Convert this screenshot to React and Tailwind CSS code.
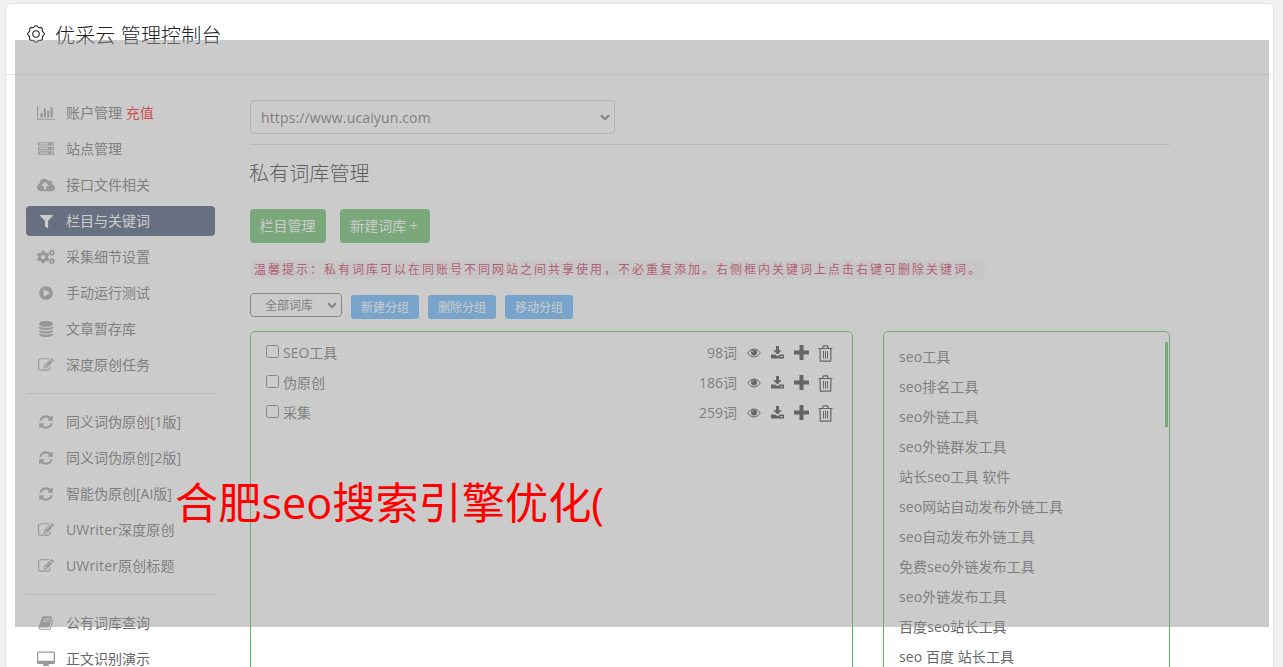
import React from "react";
import { FaCloudUploadAlt, FaFilter, FaCogs } from "react-icons/fa";

const PATHS = {
  chart: "M640 896v512H384V896h256zm384-512v1024H768V384h256zm1024 1152v128H0V128h128v1408h1920zm-640-896v768h-256V640h256zm384-384v1152h-256V256h256z",
  server: "M128 1408h1024v-128H128v128zm0-512h1024V768H128v128zm1568 448q0-40-28-68t-68-28-68 28-28 68 28 68 68 28 68-28 28-68zM128 384h1024V256H128v128zm1568 448q0-40-28-68t-68-28-68 28-28 68 28 68 68 28 68-28 28-68zm0-512q0-40-28-68t-68-28-68 28-28 68 28 68 68 28 68-28 28-68zm96 832v384H0v-384h1792zm0-512v384H0V640h1792zm0-512v384H0V128h1792z",
  play: "M896 128q209 0 385.5 103T1561 510.5 1664 896t-103 385.5-279.5 279.5T896 1664t-385.5-103T231 1281.5 128 896t103-385.500T510.500 231 896 128zm384 823q32-18 32-55t-32-55L736 521q-31-19-64-1-32 19-32 56v640q0 37 32 56 16 8 32 8 17 0 32-9z",
  database: "M896 768q237 0 443-43t325-127v170q0 69-103 128t-280 93.500-385 34.500-385-34.500T231 896 128 768V598q119 84 325 127t443 43zm0 768q237 0 443-43t325-127v170q0 69-103 128t-280 93.500-385 34.500-385-34.500-280-93.500-103-128v-170q119 84 325 127t443 43zm0-384q237 0 443-43t325-127v170q0 69-103 128t-280 93.500-385 34.500-385-34.500-280-93.500-103-128V982q119 84 325 127t443 43zM896 0q208 0 385 34.500t280 93.500 103 128v128q0 69-103 128t-280 93.500T896 640t-385-34.500T231 512 128 384V256q0-69 103-128t280-93.500T896 0z",
  edit: "M888 1184l116-116-152-152-116 116v56h96v96h56zm440-720q-16-16-33 1L945 815q-17 17-1 33t33-1l350-350q17-17 1-33zm80 594v190q0 119-84.500 203.500T1120 1536H288q-119 0-203.500-84.500T0 1248V416q0-119 84.500-203.500T288 128h832q63 0 117 25 15 7 18 23 3 17-9 29l-49 49q-14 14-32 8-23-6-45-6H288q-66 0-113 47t-47 113v832q0 66 47 113t113 47h832q66 0 113-47t47-113v-126q0-13 9-22l64-64q15-15 35-7t20 29zm-96-738l288 288-672 672H640V992zm444 132l-92 92-288-288 92-92q28-28 68-28t68 28l152 152q28 28 28 68t-28 68z",
  refresh: "M1639 1056q0 5-1 7-64 268-268 434.500T892 1664q-146 0-282.500-55T366 1452l-129 129q-19 19-45 19t-45-19-19-45v-448q0-26 19-45t45-19h448q26 0 45 19t19 45-19 45l-137 137q71 66 161 102t187 36q134 0 250-65t186-179q11-17 53-117 8-23 30-23h192q13 0 22.500 9.500t9.500 22.500zm25-800v448q0 26-19 45t-45 19h-448q-26 0-45-19t-19-45 19-45l138-138Q1097 384 896 384q-134 0-250 65T460 628q-11 17-53 117-8 23-30 23H178q-13 0-22.500-9.500T146 736v-7q65-268 270-434.500T896 128q146 0 284 55.500T1425 340l130-129q19-19 45-19t45 19 19 45z",
  book: "M1703 478q40 57 18 129l-275 906q-19 64-76.500 107.500T1247 1664H324q-77 0-148.500-53.500T76 1479q-24-67-2-127 0-4 3-27t4-37q1-8-3-21.500t-3-19.500q2-11 8-21t16.500-23.500T116 1179q23-38 45-91.500t30-91.500q3-10 .5-30t-.5-28q3-11 17-28t17-23q21-36 42-92t25-90q1-9-2.500-32t.5-28q4-13 22-30.500t22-22.500q19-26 42.500-84.500T404 411q1-8-3-25.500t-2-26.500q2-8 9-18t18-23 17-21q8-12 16.500-30.500t15-35 16-36 19.500-32T533.500 139t36-11.500T617 133l-1 3q38-9 51-9h761q74 0 114 56t18 130l-274 906q-36 119-71.500 153.500T1086 1407H217q-27 0-38 15-11 16-1 43 24 70 144 70h923q29 0 56-15.500t35-41.500l300-987q7-22 5-57 38 15 59 43zm-1064 2q-4 13 2 22.500t20 9.500h608q13 0 25.500-9.500T1311 480l21-64q4-13-2-22.500t-20-9.500H702q-13 0-25.500 9.500T660 416zm-83 256q-4 13 2 22.500t20 9.500h608q13 0 25.500-9.500T1228 736l21-64q4-13-2-22.500t-20-9.500H619q-13 0-25.500 9.500T577 672z",
};

function Glyph({ name }) {
  const wide = name === "chart";
  return (
    <svg
      viewBox={wide ? "0 0 2048 1792" : "0 0 1792 1792"}
      width={wide ? 18 : 16}
      height="16"
      fill="currentColor"
    >
      <path d={PATHS[name]} />
    </svg>
  );
}

function Desktop() {
  return (
    <svg viewBox="0 0 18 16" width="18" height="16" fill="currentColor">
      <path
        fillRule="evenodd"
        d="M1.500 0.500h15A1.500 1.500 0 0 1 18 2v9.500a1.500 1.500 0 0 1-1.500 1.500H11.500l.5 1.500v.5H6v-.5L6.500 13H1.500A1.500 1.500 0 0 1 0 11.500V2A1.500 1.500 0 0 1 1.500 .5zM1.300 1.800v8h15.400v-8z"
      />
    </svg>
  );
}

const gearPath =
  Array.from({ length: 96 }, (_, i) => {
    const a = (i / 96) * Math.PI * 2;
    const r = 7.7 + 0.6 * Math.cos(8 * a);
    return `${i ? "L" : "M"}${(9 + r * Math.sin(a)).toFixed(2)} ${(9 - r * Math.cos(a)).toFixed(2)}`;
  }).join("") + "Z";

function Gear() {
  return (
    <svg viewBox="0 0 18 18" width="18" height="18" fill="none" stroke="currentColor" strokeWidth="1.100">
      <path d={gearPath} />
      <circle cx="9" cy="9" r="3.200" />
    </svg>
  );
}

function Chevron() {
  return (
    <svg viewBox="0 0 10 7" width="10" height="7" fill="none" stroke="currentColor" strokeWidth="2">
      <path d="M1 1.200l4 4 4-4" />
    </svg>
  );
}

function RowIcons() {
  return (
    <div className="flex items-center text-[#333]">
      <svg viewBox="0 0 14 10" width="14" height="10" className="ml-[10px]">
        <path d="M.6 5Q3.500 .9 7 .9T13.400 5Q10.500 9.100 7 9.100T.6 5z" fill="none" stroke="currentColor" strokeWidth="1" />
        <circle cx="7" cy="4.500" r="3" fill="currentColor" />
        <path d="M5.300 4.200Q5.500 3 6.800 2.900" fill="none" stroke="#fff" strokeWidth=".8" />
      </svg>
      <svg viewBox="0 0 13 13" width="13" height="13" className="mb-[2px] ml-[10px]" fill="currentColor">
        <path d="M5 0h3v4.200h2.800L6.500 8.500 2.200 4.200H5z" />
        <path fillRule="evenodd" d="M0 8.500h4.200l2.300 1.800 2.300-1.800H13V12.500H0zM9.500 10v1h2v-1z" />
      </svg>
      <svg viewBox="0 0 15 15" width="15" height="15" className="mb-[1px] ml-[10px]" fill="currentColor">
        <path d="M5.500 0h4v5.500H15v4H9.500V15h-4V9.500H0v-4h5.500z" />
      </svg>
      <svg viewBox="0 0 15 17" width="15" height="17" className="ml-[9px]" fill="none" stroke="currentColor">
        <path d="M.5 3.500h14M4.500 3.200L5.500.8h4l1 2.400M2 3.500l.3 12.700h10.400L13 3.500" strokeWidth="1.200" />
        <path d="M5.500 6v7.500M7.500 6v7.500M9.500 6v7.500" />
      </svg>
    </div>
  );
}

const groups = [
  [
    [<Glyph name="chart" />, "账户管理", "充值"],
    [<Glyph name="server" />, "站点管理"],
    [<FaCloudUploadAlt size={18} />, "接口文件相关"],
    [<FaFilter size={13} />, "栏目与关键词"],
    [<FaCogs size={18} />, "采集细节设置"],
    [<Glyph name="play" />, "手动运行测试"],
    [<Glyph name="database" />, "文章暂存库"],
    [<Glyph name="edit" />, "深度原创任务"],
  ],
  [
    [<Glyph name="refresh" />, "同义词伪原创[1版]"],
    [<Glyph name="refresh" />, "同义词伪原创[2版]"],
    [<Glyph name="refresh" />, "智能伪原创[AI版]"],
    [<Glyph name="edit" />, "UWriter深度原创"],
    [<Glyph name="edit" />, "UWriter原创标题"],
  ],
  [
    [<Glyph name="book" />, "公有词库查询"],
    [<Desktop />, "正文识别演示"],
  ],
];

const rows = [
  ["SEO工具", "98词"],
  ["伪原创", "186词"],
  ["采集", "259词"],
];

const words = [
  "seo工具",
  "seo排名工具",
  "seo外链工具",
  "seo外链群发工具",
  "站长seo工具 软件",
  "seo网站自动发布外链工具",
  "seo自动发布外链工具",
  "免费seo外链发布工具",
  "seo外链发布工具",
  "百度seo站长工具",
  "seo 百度 站长工具",
];

function Sidebar() {
  return (
    <nav className="w-[189px] shrink-0 pt-[23px]">
      {groups.map((items, g) => (
        <div
          key={g}
          className={g ? "mt-[13px] flex flex-col gap-[6px] border-t border-[#dcdcdc] pt-[13px]" : "flex flex-col gap-[6px]"}
        >
          {items.map(([icon, label, extra]) => {
            const active = label === "栏目与关键词";
            return (
              <div
                key={label}
                className={
                  active
                    ? "flex h-[30px] items-center rounded bg-[#354869] text-white"
                    : "flex h-[30px] items-center text-[#666]"
                }
              >
                <span className={active ? "flex w-10 justify-center text-white" : "flex w-10 justify-center text-[#999]"}>
                  {icon}
                </span>
                <span className={label.startsWith("UW") ? "whitespace-nowrap tracking-[0.15px]" : "whitespace-nowrap"}>
                  {label}
                  {extra && <span className="text-[#f00]"> {extra}</span>}
                </span>
              </div>
            );
          })}
        </div>
      ))}
    </nav>
  );
}

export default function App() {
  return (
    <div className="relative h-screen overflow-hidden bg-[#f1f1f1] pl-[5px] pr-[9px] pt-[3px] font-['Open_Sans','Noto_Sans_CJK_SC',sans-serif] text-[14px] font-normal leading-5 text-[#666]">
      <div className="h-[720px] rounded-[5px] border border-[#e4e4e4] bg-white">
        <header className="flex h-[71px] items-start border-b border-[#e4e4e4] pl-[20.5px] pt-[18px] text-[#222]">
          <div className="mt-[2.5px]">
            <Gear />
          </div>
          <h1 className="ml-[10.5px] whitespace-nowrap text-[20px] font-light leading-[28px] tracking-[0.15px]">优采云 管理控制台</h1>
        </header>

        <div className="flex pl-[20px]">
          <Sidebar />

          <main className="ml-[35px] w-[920px] pt-[25px]">
            <div className="border-b border-[#dcdcdc] pb-[10px]">
              <div className="flex h-[34px] w-[365px] items-center justify-between rounded border border-[#ccc] pl-[10px] pr-[4px]">
                <span className="pt-px text-[14px] tracking-[0.14px]">https://www.ucaiyun.com</span>
                <Chevron />
              </div>
            </div>

            <h2 className="-ml-px mt-[15px] text-[20px] font-light leading-[28px] tracking-[0.1px] text-[#222]">私有词库管理</h2>

            <div className="mt-[21px] flex gap-[14px] text-white">
              <button className="h-[34px] w-[76px] rounded bg-[#5cb85c] pr-px">栏目管理</button>
              <button className="h-[34px] w-[90px] rounded bg-[#5cb85c] pr-[2px]">新建词库 +</button>
            </div>

            <div className="mt-[17px] h-[19px] w-[735px] whitespace-nowrap rounded bg-[#f9f2f4] pl-[4px] font-['Noto_Sans_CJK_SC',sans-serif] text-[12px] leading-[17px] tracking-[2px] text-[#c7254e]">
              温馨提示：私有词库可以在同账号不同网站之间共享使用，不必重复添加。右侧框内关键词上点击右键可删除关键词。
            </div>

            <div className="mt-[14px] flex items-start text-[12px]">
              <div className="mr-[9px] flex h-[24px] w-[92px] items-center justify-between rounded border border-[#767676] pl-[14px] pr-[4px]">
                <span className="pt-px">全部词库</span>
                <Chevron />
              </div>
              <div className="mt-[2px] flex gap-[9px] text-white">
                {["新建分组", "删除分组", "移动分组"].map((t) => (
                  <button key={t} className="h-[24px] w-[68px] rounded-[3px] bg-[#59b1ff] pt-[2px]">
                    {t}
                  </button>
                ))}
              </div>
            </div>

            <div className="mt-[12px] flex justify-between">
              <section className="h-[400px] w-[603px] rounded-[5px] border border-[#5cb85c] pl-[15px] pr-[19px] pt-[6px]">
                {rows.map(([name, count]) => (
                  <div key={name} className="flex h-[30px] items-center">
                    <input type="checkbox" className="mb-[3px] h-[13px] w-[13px]" />
                    <span className="ml-[4px] flex-1">{name}</span>
                    <span>{count}</span>
                    <RowIcons />
                  </div>
                ))}
              </section>

              <section className="flex h-[400px] w-[287px] justify-between rounded-[5px] border border-[#5cb85c] pl-[15px] pr-[1px] pt-[10px]">
                <ul>
                  {words.map((w) => (
                    <li key={w} className="h-[30px] whitespace-nowrap leading-[30px] tracking-[0.08px]">
                      {w}
                    </li>
                  ))}
                </ul>
                <div className="h-[85px] w-[3px] bg-[#5cb85c]" />
              </section>
            </div>
          </main>
        </div>
      </div>

      <div className="absolute left-[15px] top-[40px] h-[587px] w-[1254px] bg-[#979797]/50" />
      <div className="absolute left-[175px] top-[473px] whitespace-nowrap text-[43.2px] font-normal leading-[60px] text-[#f00]">
        合肥seo搜索引擎优化(
      </div>
    </div>
  );
}
